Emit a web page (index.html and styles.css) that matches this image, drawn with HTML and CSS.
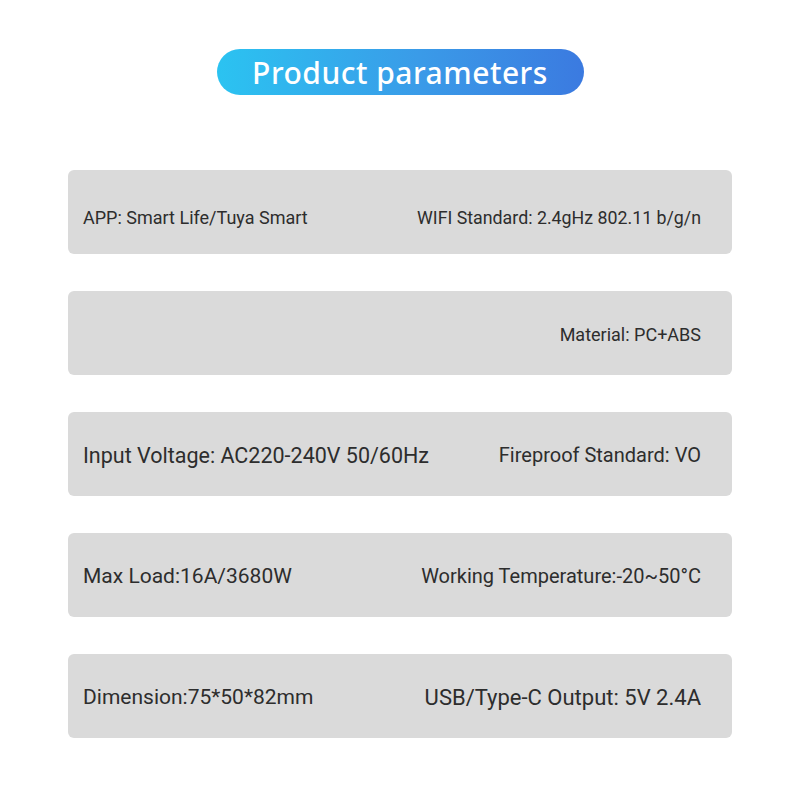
FILE: index.html
```html
<!DOCTYPE html>
<html>
<head>
<meta charset="utf-8">
<link rel="stylesheet" href="styles.css">
</head>
<body>
<div class="page">
  <div class="title-wrap"><div class="title">Product parameters</div></div>
  <div class="cards">
    <div class="card low"><span class="sz-18">APP: Smart Life/Tuya Smart</span><span class="sz-178">WIFI Standard: 2.4gHz 802.11 b/g/n</span></div>
    <div class="card"><span></span><span class="sz-18">Material: PC+ABS</span></div>
    <div class="card"><span class="sz-215">Input Voltage: AC220-240V 50/60Hz</span><span class="sz-20">Fireproof Standard: VO</span></div>
    <div class="card"><span class="sz-21">Max Load:16A/3680W</span><span class="sz-20">Working Temperature:-20~50°C</span></div>
    <div class="card"><span class="sz-21">Dimension:75*50*82mm</span><span class="sz-22">USB/Type-C Output: 5V 2.4A</span></div>
  </div>
</div>
</body>
</html>
```
FILE: styles.css
```css
html, body { margin: 0; padding: 0; background: #fff; }
body { font-family: Roboto, "Noto Sans", sans-serif; color: #2d2d2d; }
.page { width: 800px; height: 800px; padding-top: 49px; box-sizing: border-box; }
.title-wrap { display: flex; justify-content: center; }
.title {
  width: 367px; height: 46px; border-radius: 23px;
  background: linear-gradient(90deg, #2bc3f1 0%, #3a9be8 55%, #3b7ae0 100%);
  color: #fff; font-family: "Noto Sans", sans-serif; font-size: 30px; font-weight: 500;
  display: flex; align-items: center; justify-content: center;
  letter-spacing: 0.5px;
}
.cards { margin: 75px 68px 0; display: flex; flex-direction: column; gap: 37px; }
.card {
  height: 84px; background: #dadada; border-radius: 6px;
  display: flex; align-items: center; justify-content: space-between;
  padding: 2px 31px 0 15px; box-sizing: border-box;
  font-size: 20px;
}
.card.low { padding-top: 10px; }
.sz-178 { font-size: 17.8px; }
.sz-18 { font-size: 18px; }
.sz-20 { font-size: 20px; }
.sz-21 { font-size: 21px; }
.sz-215 { font-size: 21.5px; }
.sz-22 { font-size: 22px; }
```
